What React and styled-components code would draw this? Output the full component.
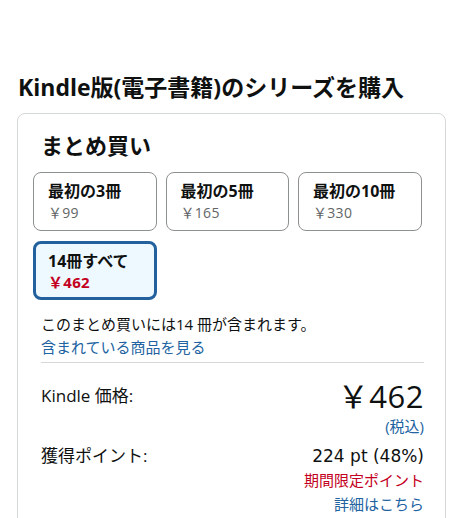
import React from "react";
import styled, { createGlobalStyle } from "styled-components";

const Global = createGlobalStyle`
  html, body { margin: 0; padding: 0; background: #fff; }
  body {
    font-family: "Open Sans", "Noto Sans CJK JP", sans-serif;
    color: #0f1111;
  }
`;

const Page = styled.div`
  width: 456px;
  height: 518px;
  overflow: hidden;
  box-sizing: border-box;
  padding: 72px 10px 0 17px;
`;

const Title = styled.h2`
  margin: 0 0 11px 1px;
  font-size: 23px;
  line-height: 30px;
  font-weight: 700;
  white-space: nowrap;
`;

const Card = styled.section`
  border: 1px solid #d5d9d9;
  border-radius: 8px;
  padding: 17px 21px 20px 23px;
  min-height: 420px;
`;

const Heading = styled.h3`
  margin: 0 0 13px;
  font-size: 22px;
  line-height: 28px;
  font-weight: 700;
`;

const Options = styled.div`
  display: grid;
  grid-template-columns: repeat(3, 123.5px);
  column-gap: 9px;
  row-gap: 10px;
  margin-left: -8px;
`;

const Option = styled.button`
  box-sizing: border-box;
  height: 59px;
  margin: 0;
  text-align: left;
  font-family: inherit;
  cursor: pointer;
  border-radius: 8px;
  border: ${(p) => (p.$selected ? "3px solid #23619e" : "1px solid #8d9090")};
  background: ${(p) => (p.$selected ? "#edf8ff" : "#fff")};
  padding: ${(p) => (p.$selected ? "6px 12px 4px" : "7px 14px")};
  display: flex;
  flex-direction: column;
`;

const OptionLabel = styled.span`
  font-size: 16px;
  line-height: 22px;
  font-weight: 700;
  color: #0f1111;
`;

const OptionPrice = styled.span`
  font-size: ${(p) => (p.$selected ? 15 : 14)}px;
  line-height: ${(p) => (p.$selected ? 20 : 22)}px;
  font-weight: ${(p) => (p.$selected ? 700 : 400)};
  color: ${(p) => (p.$selected ? "#c40022" : "#626666")};
  letter-spacing: 0.3px;
`;

const Note = styled.p`
  margin: 13px 0 0;
  font-size: 15px;
  line-height: 23px;
`;

const Link = styled.a`
  display: block;
  color: #2162a1;
  font-size: 15px;
  line-height: 23px;
  text-decoration: none;
  text-align: ${(p) => (p.$right ? "right" : "left")};
`;

const Divider = styled.hr`
  border: 0;
  border-top: 1px solid #d5d9d9;
  margin: 3px 0 0;
`;

const Row = styled.div`
  display: flex;
  justify-content: space-between;
  align-items: center;
  margin-top: ${(p) => p.$top || 0}px;
`;

const RowLabel = styled.span`
  font-size: 17px;
  line-height: 24px;
`;

const BigPrice = styled.span`
  font-size: 31px;
  line-height: 38px;
  letter-spacing: 0.5px;
`;

const RowValue = styled.span`
  font-family: "DejaVu Sans", "Noto Sans CJK JP", sans-serif;
  font-size: 17px;
  line-height: 24px;
`;

const Red = styled.div`
  color: #c40022;
  font-size: 15px;
  line-height: 25px;
  text-align: right;
`;

const options = [
  { label: "最初の3冊", price: "￥99" },
  { label: "最初の5冊", price: "￥165" },
  { label: "最初の10冊", price: "￥330" },
  { label: "14冊すべて", price: "￥462", selected: true },
];

export default function App() {
  return (
    <>
      <Global />
      <Page>
        <Title>Kindle版(電子書籍)のシリーズを購入</Title>
        <Card>
          <Heading>まとめ買い</Heading>
          <Options>
            {options.map((o) => (
              <Option key={o.label} $selected={o.selected}>
                <OptionLabel>{o.label}</OptionLabel>
                <OptionPrice $selected={o.selected}>{o.price}</OptionPrice>
              </Option>
            ))}
          </Options>
          <Note>このまとめ買いには14 冊が含まれます。</Note>
          <Link href="#">含まれている商品を見る</Link>
          <Divider />
          <Row $top={14}>
            <RowLabel>Kindle 価格:</RowLabel>
            <BigPrice>￥462</BigPrice>
          </Row>
          <Link href="#" $right>(税込)</Link>
          <Row $top={6}>
            <RowLabel>獲得ポイント:</RowLabel>
            <RowValue>224 pt (48%)</RowValue>
          </Row>
          <Red>期間限定ポイント</Red>
          <Link href="#" $right>詳細はこちら</Link>
        </Card>
      </Page>
    </>
  );
}
